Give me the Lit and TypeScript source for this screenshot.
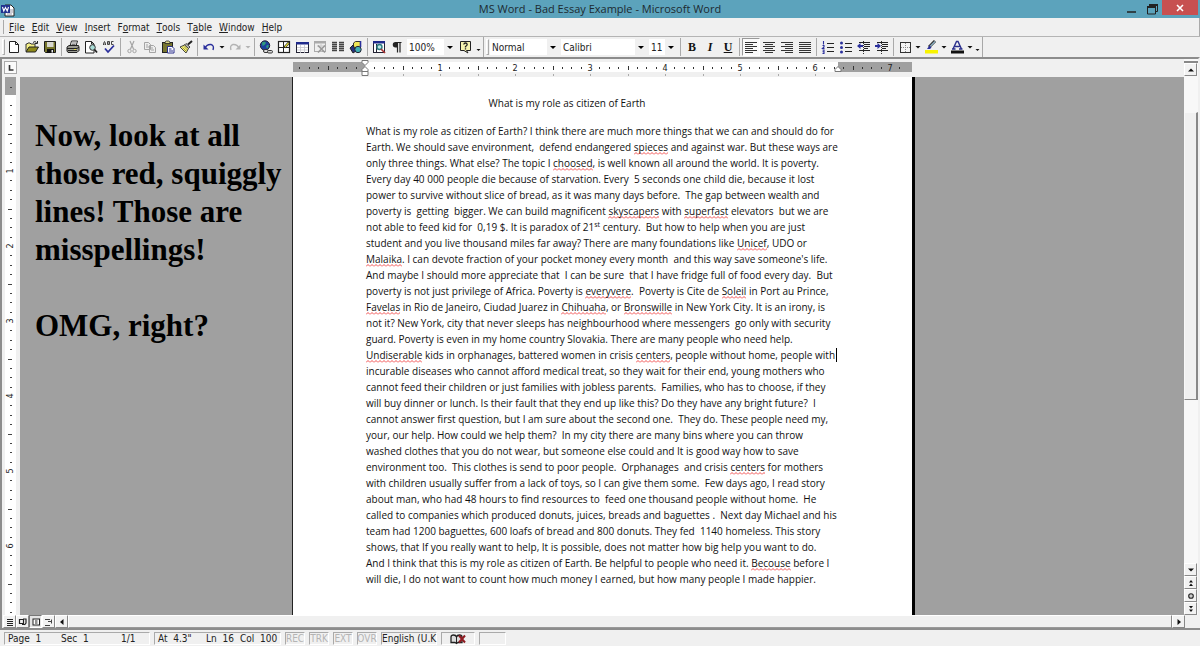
import { LitElement, html, svg, css, nothing, TemplateResult } from "lit";
import { customElement, property } from "lit/decorators.js";

const I = (body: unknown, w = 14, h = 14) =>
  html`<svg width=${w} height=${h} viewBox="0 0 ${w} ${h}" aria-hidden="true">${body}</svg>`;

const lines = (rows: number[][], color = "#222") =>
  rows.map(([x, y, w]) => svg`<rect x=${x} y=${y} width=${w} height="1" fill=${color}/>`);

const icons: Record<string, TemplateResult> = {
  word: I(svg`<path d="M5 3h6l3 3v8H5z" fill="#fff" stroke="#222"/><path d="M7 12h5M10 8h3M10 10h3" stroke="#99a"/>
    <rect x="1" y="3" width="9" height="8" fill="#22328f"/><path d="M2.5 5l1.3 4L5.5 5.5 7.2 9l1.3-4" fill="none" stroke="#fff" stroke-width="1.1"/>`, 15, 15),
  new: I(svg`<path d="M2.500 1.500h6l3 3v8h-9z" fill="#fff" stroke="#222"/><path d="M8.500 1.500v3h3" fill="none" stroke="#222"/>`),
  open: I(svg`<path d="M1 11.500V4h1l1-1h2l1 1h4v3" fill="#f4ef86" stroke="#333"/><path d="M1 12l3-5h9.500l-3 5z" fill="#8f8a1a" stroke="#222"/><path d="M8 2.500q2-2 3.500 0M12.500 1v2.500h-2.500" fill="none" stroke="#222"/>`),
  save: I(svg`<path d="M1.500 1.500h11v11h-10l-1-1z" fill="#76752b" stroke="#1c1c1c"/><rect x="4" y="2" width="6.500" height="5" fill="#d8d8d0"/><rect x="4" y="9" width="7" height="4" fill="#111"/><rect x="8.500" y="10" width="1.500" height="2.500" fill="#eee"/>`),
  print: I(svg`<path d="M4 6l1.500-5h6L10 6" fill="#fff" stroke="#222"/><path d="M6 3h4M5.500 4.500h4" stroke="#555" stroke-width=".8"/><path d="M1 7l2-1.500h9.500L13 7v3.500l-2 2H2L1 11z" fill="#9b9b93" stroke="#222"/><path d="M1 8.500h10l2-1.500M2 10.500h9" stroke="#222" fill="none"/><rect x="8" y="9" width="2" height="1" fill="#e4de3c"/>`),
  preview: I(svg`<path d="M1.500 1.500h6l2.500 2.500v9H1.500z" fill="#fff" stroke="#222"/><path d="M7.500 1.500V4H10" fill="none" stroke="#222"/><circle cx="8.500" cy="7.500" r="2.800" fill="#a9dcd6" stroke="#333"/><path d="M10.500 9.500L13 12.500" stroke="#222" stroke-width="1.800"/>`),
  spell: I(svg`<path d="M1.500 5V3.500L2.500 1.500l1 2V5M1.500 4h2M5.500 1.500v3h2v-3zM5.500 3h2M11.500 1.500h-2v3h2" fill="none" stroke="#333" stroke-width=".9"/><path d="M3 8.500L6 12l6-6.500" fill="none" stroke="#2a2f9c" stroke-width="1.800"/>`),
  cut: I(svg`<path d="M5 1l3.500 8M9 1L5.500 9" stroke="#a5a5a5" fill="none" stroke-width="1.200"/><circle cx="4.500" cy="11" r="1.700" fill="none" stroke="#a5a5a5"/><circle cx="9.500" cy="11" r="1.700" fill="none" stroke="#a5a5a5"/>`),
  copy: I(svg`<path d="M1.500 2.500h4l2 2v5h-6z M6.500 5.500h4l2 2v5h-6z" fill="#eee" stroke="#a5a5a5"/><path d="M3 5h2M3 7h3M8 8h2M8 10h3" stroke="#a5a5a5"/>`),
  paste: I(svg`<rect x="1.500" y="2.500" width="10" height="10" fill="#77752f" stroke="#222"/><path d="M4 3.500h5v-1.500l-1.500-1h-2L4 2z" fill="#ded98c" stroke="#222" stroke-width=".8"/><path d="M6.500 6.500h4.500l2 2v4.500h-6.500z" fill="#fff" stroke="#2a2f8c"/><path d="M8 9h2.500M8 11h4" stroke="#2a2f8c"/>`),
  painter: I(svg`<path d="M13 1L9 4.500" stroke="#222" stroke-width="2"/><path d="M7 3.500l4 3.500-1.500 1.500L5.500 5z" fill="#bbb" stroke="#222" stroke-width=".8"/><path d="M5.500 5L1 7l6 6 2.500-4.500z" fill="#f2ee76" stroke="#444"/><path d="M3.500 7.500l4 4M5 6.500l3.500 3.500" stroke="#8a8630" stroke-width=".8"/>`),
  undo: I(svg`<path d="M3 8q2-4 6-3.500Q12.500 5.500 11 10" fill="none" stroke="#2a2f9c" stroke-width="1.400"/><path d="M1.500 4.500v5h5z" fill="#2a2f9c"/>`),
  redo: I(svg`<path d="M11 8q-2-4-6-3.500Q1.500 5.500 3 10" fill="none" stroke="#b3b3b3" stroke-width="1.400"/><path d="M12.500 4.500v5h-5z" fill="#b3b3b3"/>`),
  globe: I(svg`<circle cx="6" cy="5.500" r="4.700" fill="#1c3f9c" stroke="#223"/><path d="M3 2.500q3-1.500 4 .5L5.500 5 3.500 6zM8 5l2 .5-1.500 3L7 7z" fill="#2f9b7c"/><rect x="4.500" y="9.500" width="5" height="3" rx="1.500" fill="#ddd" stroke="#333"/><rect x="8.500" y="10.500" width="5" height="2.500" rx="1.200" fill="#ddd" stroke="#333"/>`),
  tables: I(svg`<rect x="1.500" y="1.500" width="11" height="11" fill="#fff" stroke="#222" stroke-width="1.200"/><path d="M2 7.500h10M6.500 2v11" stroke="#222"/><path d="M12 2.500L7.500 7.500" stroke="#222" stroke-width="2.600"/><path d="M11.500 3L8 7" stroke="#e6de3a" stroke-width="1.200"/>`),
  table: I(svg`<rect x="1.500" y="2.500" width="12" height="10" fill="#fff" stroke="#223"/><rect x="1" y="2" width="13" height="2.500" fill="#1f2a8c"/><path d="M2 7.500h11M2 10h11M5.500 5v8M9.500 5v8" stroke="#c4c4cc" stroke-width=".8"/>`),
  excel: I(svg`<rect x="1.500" y="1.500" width="11" height="10" fill="#eee" stroke="#aaa"/><rect x="1" y="1" width="12" height="2.500" fill="#aaa"/><path d="M4 6h8M8 4v8" stroke="#ccc"/><path d="M5 5.500l7 7M12 5.500l-7 7" stroke="#999" stroke-width="1.600"/>`),
  columns: I(svg`<path d="M1 2.500h5M1 4.500h5M1 6.500h5M1 8.500h5M1 10.500h5M8 2.500h5M8 4.500h5M8 6.500h5M8 8.500h5M8 10.500h5" stroke="#444" stroke-width="1.400"/>`),
  draw: I(svg`<path d="M4.500 3l2-1.500h5v5l-2 2h-5z" fill="#efe655" stroke="#333"/><path d="M1 8l3-3 3 6-3 2z" fill="#27317f" stroke="#222"/><circle cx="9" cy="9.500" r="3.200" fill="#3faeb4" stroke="#223"/><path d="M11.500 1v6" stroke="#2a2f9c" stroke-width="1.600"/>`),
  docmap: I(svg`<rect x="1.500" y="1.500" width="11" height="11" fill="#fff" stroke="#223"/><rect x="1" y="1" width="12" height="2.500" fill="#1f2a8c"/><path d="M4.500 4v9" stroke="#223"/><circle cx="7.500" cy="7" r="2.500" fill="#bfe8e6" stroke="#2a7a80" stroke-width="1.400"/><path d="M9 9l4 4" stroke="#a33" stroke-width="1.700"/>`),
  para: I(svg`<path d="M7 2H5.500a2.700 2.700 0 0 0 0 5.500H7z" fill="#222"/><path d="M7.500 12.500v-10M10 12.500v-10M6.500 2.500h5" stroke="#222" fill="none" stroke-width="1.200"/>`),
  help: I(svg`<path d="M1.500 1.500h10v9h-4l1.500 2.500-4-2.500h-3.500z" fill="#f6f3b0" stroke="#222"/><path d="M4.800 4.500Q5 3 6.500 3t1.700 1.500Q8.200 5.500 6.500 6.500v1M6.500 8.300v1.200" fill="none" stroke="#222" stroke-width="1.300"/>`),
  left: I(lines([[1, 2, 12], [1, 4, 8], [1, 6, 12], [1, 8, 8], [1, 10, 12], [1, 12, 8]], "#333")),
  center: I(lines([[1, 2, 12], [3, 4, 8], [1, 6, 12], [3, 8, 8], [1, 10, 12], [3, 12, 8]], "#333")),
  right: I(lines([[1, 2, 12], [5, 4, 8], [1, 6, 12], [5, 8, 8], [1, 10, 12], [5, 12, 8]], "#333")),
  justify: I(lines([[1, 2, 12], [1, 4, 12], [1, 6, 12], [1, 8, 12], [1, 10, 12], [1, 12, 12]], "#333")),
  numbers: I(svg`<path d="M2.500 1v3.500M1.500 5.500h1.500v1.500l-1.500 1.500h2M1.500 10h1.500v3.500h-1.500M1.500 11.700h1.500" fill="none" stroke="#2a2f9c" stroke-width="1.100"/>${lines([[6, 3, 7], [6, 7, 7], [6, 11, 7]])}`),
  bullets: I(svg`<circle cx="2.500" cy="3" r="1.500" fill="#2a2f9c"/><circle cx="2.500" cy="7.500" r="1.500" fill="#2a2f9c"/><circle cx="2.500" cy="12" r="1.500" fill="#2a2f9c"/>${lines([[6, 3, 7], [6, 7, 7], [6, 11, 7]])}`),
  outdent: I(svg`${lines([[2, 2, 11], [7, 4, 6], [7, 6, 6], [7, 8, 4], [2, 10, 11]])}<path d="M0 6l3.500-3v2h2.500v2H3.500v2z" fill="#2a2f9c"/><path d="M6.500 1v13" stroke="#333" stroke-dasharray="1 1"/>`),
  indent: I(svg`${lines([[2, 2, 11], [7, 4, 6], [7, 6, 6], [7, 8, 4], [2, 10, 11]])}<path d="M6 6L2.500 3v2H0v2h2.500v2z" fill="#2a2f9c"/><path d="M6.500 1v13" stroke="#333" stroke-dasharray="1 1"/>`),
  border: I(svg`<rect x="2.500" y="2.500" width="10" height="10" fill="#f4f4f4" stroke="#333"/><path d="M7.500 3v9M3 7.500h9" stroke="#888" stroke-dasharray="1 1"/>`),
  highlight: I(svg`<path d="M11 1L5 7" stroke="#333" stroke-width="3"/><path d="M11 1.500L6 6.500" stroke="#8fb5c9" stroke-width="1.200"/><path d="M5.500 5.500L3 9h3l1.500-1.500z" fill="#2a2f9c"/><rect x="1" y="10" width="13" height="3.500" fill="#f8f400"/>`),
  fontcolor: I(svg`<path d="M3 9L6.500 1.500h1.500L11.500 9M4.500 6.500h5M2 9h3.500M9 9h3.500" fill="none" stroke="#2a2f8c" stroke-width="1.400"/><rect x="1" y="10.500" width="13" height="3" fill="#111"/>`),
  book: I(svg`<path d="M1 9.500V4q0-2 2.500-2T6.500 4q.5-2 3-2t2.500 2v5.500H8L6.500 10.500 5 9.500z" fill="#ddd" stroke="#222" stroke-width="1.300"/><path d="M6.500 4v6" stroke="#222"/><path d="M9 2.500l6 7M15 2.500l-6 7" stroke="#8f1c22" stroke-width="2"/>`, 17, 12),
  vnormal: I(lines([[2, 2, 6], [2, 4, 6], [2, 6, 6], [2, 8, 6]]), 10, 10),
  vweb: I(svg`<path d="M1.500 2.500h4v4h-4zM4 7.500h3" fill="none" stroke="#222" stroke-width="1.200"/><path d="M5 2h3v4L6.500 8" fill="none" stroke="#222" stroke-width="1.200"/>`, 10, 10),
  vprint: I(svg`<rect x="2" y="2" width="6.500" height="6" fill="#fff" stroke="#222"/><path d="M4 4h2.500M4 6h2.500" stroke="#222"/>`, 10, 10),
  voutline: I(svg`<path d="M1 2.500h5M4 4.500h4M1 8.500h5M7.500 2.500v4" stroke="#444" fill="none"/>`, 10, 10),
  tleft: I(svg`<path d="M6.500 2v6L3 5z" fill="#111"/>`, 10, 10),
  tright: I(svg`<path d="M3.500 2v6L7 5z" fill="#111"/>`, 10, 10),
  up: I(svg`<path d="M2 6.500h6L5 3.500z" fill="#111"/>`, 10, 10),
  down: I(svg`<path d="M2 3.500h6L5 6.500z" fill="#111"/>`, 10, 10),
  pageup: I(svg`<path d="M3 4.500h4L5 2zM3 8h4L5 5.500z" fill="#111"/>`, 10, 10),
  pagedown: I(svg`<path d="M3 2h4L5 4.500zM3 5.500h4L5 8z" fill="#111"/>`, 10, 10),
  browse: I(svg`<circle cx="5" cy="5" r="2.300" fill="#ccc" stroke="#222" stroke-width="1.100"/>`, 10, 10),
  arrow: I(svg`<path d="M1.500 6h5L4 8.500z" fill="#111"/>`, 8, 14),
  arrowoff: I(svg`<path d="M1.500 6h5L4 8.500z" fill="#b3b3b3"/>`, 8, 14),
  more: I(svg`<path d="M1.500 9h4L3.500 11z" fill="#111"/>`, 8, 14),
};

const base = css`
  * { box-sizing: border-box; }
  :host { font-family: "DejaVu Sans Condensed", "DejaVu Sans", sans-serif; font-size: 10px; color: #222; }
  button { border: 0; padding: 0; margin: 0; background: none; font: inherit; color: inherit; display: flex; align-items: center; justify-content: center; }
  svg { display: block; flex: none; }
`;

@customElement("word-toolbar")
class WordToolbar extends LitElement {
  static styles = [base, css`
    :host { display: block; }
    .bar { display: flex; align-items: center; height: 21px; background: #f0f0f0; border-top: 1px solid #b4b4b4; }
    .grip { width: 3px; height: 16px; border: 1px solid #aaa; border-left-color: #fff; border-top-color: #fff; margin: 0 0 0 2px; }
    .set { display: flex; align-items: center; border-right: 1px solid #a8a8a8; height: 20px; }
    .tool { width: 18px; height: 18px; }
    .drop { width: 8px; height: 18px; }
    .pressed { background: #fafafa; border: 1px solid; border-color: #999 #fff #fff #999; }
    .sep { width: 1px; height: 18px; background: #aaa; margin: 0 2px; }
    .letter { font: bold 12px "Liberation Serif", serif; color: #111; }
    .italic { font-style: italic; }
    .under { text-decoration: underline; }
    select { appearance: none; border: 0; border-radius: 0; margin: 0 1px; padding: 0 12px 0 2px; height: 16px; font: inherit; color: #222;
      background: #fff url("data:image/svg+xml,%3Csvg xmlns='http://www.w3.org/2000/svg' width='12' height='16'%3E%3Cpath fill='%23f0f0f0' d='M0 0h12v16H0z'/%3E%3Cpath d='M3 7h6L6 10z'/%3E%3C/svg%3E") right / 12px 16px no-repeat; }
    .zoom { width: 49px; }
    .style { width: 69px; }
    .face { width: 86px; }
    .size { width: 28px; }
  `];

  tool(name: string, label: string, extra = "") {
    return html`<button class="tool ${extra}" aria-label=${label}>${icons[name]}</button>`;
  }
  drop(name = "arrow") {
    return html`<button class="drop" aria-label="More options">${icons[name]}</button>`;
  }
  render() {
    const sep = html`<span class="sep"></span>`;
    const t = (n: string, l: string) => this.tool(n, l);
    return html`<div class="bar">
      <div class="set">
        <span class="grip"></span>
        ${t("new", "New")}${t("open", "Open")}${t("save", "Save")}${sep}
        ${t("print", "Print")}${t("preview", "Print preview")}${t("spell", "Spelling")}${sep}
        ${t("cut", "Cut")}${t("copy", "Copy")}${t("paste", "Paste")}${t("painter", "Format painter")}${sep}
        ${t("undo", "Undo")}${this.drop()}${t("redo", "Redo")}${this.drop("arrowoff")}${sep}
        ${t("globe", "Hyperlink")}${t("tables", "Tables and borders")}${t("table", "Insert table")}${t("excel", "Insert worksheet")}${t("columns", "Columns")}${t("draw", "Drawing")}${sep}
        ${t("docmap", "Document map")}${t("para", "Show marks")}
        <select class="zoom" aria-label="Zoom"><option>100%</option></select>
        ${t("help", "Help")}${this.drop("more")}
      </div>
      <div class="set">
        <span class="grip"></span>
        <select class="style" aria-label="Style"><option>Normal</option></select>
        <select class="face" aria-label="Font"><option>Calibri</option></select>
        <select class="size" aria-label="Font size"><option>11</option></select>${sep}
        <button class="tool letter">B</button><button class="tool letter italic">I</button><button class="tool letter under">U</button>${sep}
        ${this.tool("left", "Align left", "pressed")}${t("center", "Center")}${t("right", "Align right")}${t("justify", "Justify")}${sep}
        ${t("numbers", "Numbering")}${t("bullets", "Bullets")}${t("outdent", "Decrease indent")}${t("indent", "Increase indent")}${sep}
        ${t("border", "Borders")}${this.drop()}${t("highlight", "Highlight")}${this.drop()}${t("fontcolor", "Font color")}${this.drop()}${this.drop("more")}
      </div>
    </div>`;
  }
}

const INCH = 75;

@customElement("word-ruler")
class WordRuler extends LitElement {
  @property({ type: Boolean }) vertical = false;
  static styles = [base, css`
    :host { display: block; }
    text { font-size: 9px; text-anchor: middle; fill: #222; }
  `];
  render() {
    const length = this.vertical ? 539 : 619;
    const zero = this.vertical ? 19 : 72;
    const end = this.vertical ? length : 545;
    const marks: unknown[] = [];
    for (let i = -8; i < 64; i++) {
      const p = Math.round(zero + (i * INCH) / 8);
      if (p < 4 || p > length - 4 || i === 0) continue;
      if (i % 8 === 0 && i > 0) {
        marks.push(this.vertical
          ? svg`<text x="5" y=${p} transform="rotate(-90 5 ${p})" dy="3">${i / 8}</text>`
          : svg`<text x=${p} y="9">${i / 8}</text>`);
      } else {
        const long = i % 4 === 0 ? 4 : 1;
        marks.push(this.vertical
          ? svg`<rect x=${long > 1 ? 3 : 5} y=${p} width=${long > 1 ? 4 : 2} height="1" fill="#444"/>`
          : svg`<rect x=${p} y=${long > 1 ? 4 : 5} width="1" height=${long > 1 ? 4 : 2} fill="#333"/>`);
      }
    }
    if (this.vertical) {
      return html`<svg width="11" height=${length} aria-hidden="true">
        <rect width="11" height=${length} fill="#fff"/><rect width="11" height=${zero - 1} fill="#a0a0a0"/>${marks}</svg>`;
    }
    const ticks: unknown[] = [];
    for (let x = zero + INCH / 2; x < end; x += INCH / 2) ticks.push(svg`<rect x=${Math.round(x)} y="12" width="1" height="2" fill="#aaa"/>`);
    return html`<svg width=${length} height="17" viewBox="0 -3 ${length} 17" aria-hidden="true">
      <rect width=${length} height="10" fill="#a0a0a0"/><rect x=${zero} width=${end - zero} height="10" fill="#fff"/>
      ${marks}${ticks}
      <path d="M${zero - 3} -1.500h6v2l-3 3-3-3zM${zero - 3} 9.500v-2l3-3 3 3v2zM${zero - 3} 9.500h6v4h-6z" fill="#fff" stroke="#777"/>
      <path d="M${end - 3} 9.500v-2l3-3 3 3v2z" fill="#fff" stroke="#777"/>
    </svg>`;
  }
}

// Words between asterisks are flagged by the spelling checker; ^..^ is superscript.
const ESSAY = [
  "What is my role as citizen of Earth? I think there are much more things that we can and should do for",
  "Earth. We should save environment,  defend endangered *spieces* and against war. But these ways are",
  "only three things. What else? The topic I *choosed*, is well known all around the world. It is poverty.",
  "Every day 40 000 people die because of starvation. Every  5 seconds one child die, because it lost",
  "power to survive without slice of bread, as it was many days before.  The gap between wealth and",
  "poverty is  getting  bigger. We can build magnificent *skyscapers* with *superfast* elevators  but we are",
  "not able to feed kid for  0,19 $. It is paradox of 21^st^ century.  But how to help when you are just",
  "student and you live thousand miles far away? There are many foundations like *Unicef*, UDO or",
  "*Malaika*. I can devote fraction of your pocket money every month  and this way save someone's life.",
  "And maybe I should more appreciate that  I can be sure  that I have fridge full of food every day.  But",
  "poverty is not just privilege of Africa. Poverty is *everyvere*.  Poverty is Cite de *Soleil* in Port au Prince,",
  "*Favelas* in Rio de Janeiro, Ciudad Juarez in *Chihuaha*, or *Bronswille* in New York City. It is an irony, is",
  "not it? New York, city that never sleeps has neighbourhood where messengers  go only with security",
  "guard. Poverty is even in my home country Slovakia. There are many people who need help.",
  "*Undiserable* kids in orphanages, battered women in crisis *centers*, people without home, people with|",
  "incurable diseases who cannot afford medical treat, so they wait for their end, young mothers who",
  "cannot feed their children or just families with jobless parents.  Families, who has to choose, if they",
  "will buy dinner or lunch. Is their fault that they end up like this? Do they have any bright future?  I",
  "cannot answer first question, but I am sure about the second one.  They do. These people need my,",
  "your, our help. How could we help them?  In my city there are many bins where you can throw",
  "washed clothes that you do not wear, but someone else could and It is good way how to save",
  "environment too.  This clothes is send to poor people.  Orphanages  and crisis *centers* for mothers",
  "with children usually suffer from a lack of toys, so I can give them some.  Few days ago, I read story",
  "about man, who had 48 hours to find resources to  feed one thousand people without home.  He",
  "called to companies which produced donuts, juices, breads and baguettes .  Next day Michael and his",
  "team had 1200 baguettes, 600 loafs of bread and 800 donuts. They fed  1140 homeless. This story",
  "shows, that If you really want to help, It is possible, does not matter how big help you want to do.",
  "And I think that this is my role as citizen of Earth. Be helpful to people who need it. *Becouse* before I",
  "will die, I do not want to count how much money I earned, but how many people I made happier.",
];

@customElement("word-page")
class WordPage extends LitElement {
  static styles = [base, css`
    :host { display: block; background: #fff; border-left: 1px solid #222; border-right: 3px solid #000; width: 623px; padding: 18px 72px 0 73px;
      font: 10px/16px "Open Sans", Carlito, sans-serif; color: #111; overflow: hidden; }
    h1 { margin: 0 0 12px; padding-right: 72px; font: inherit; text-align: center; }
    p { margin: 0; }
    .line { display: block; white-space: pre; }
    .bad { padding-bottom: 1px; background: url("data:image/svg+xml,%3Csvg xmlns='http://www.w3.org/2000/svg' width='4' height='3'%3E%3Cpath d='M0 2.500L2 .5l2 2' fill='none' stroke='%23e22' stroke-width='.8'/%3E%3C/svg%3E") left bottom / 4px 3px repeat-x; }
    sup { font-size: 7px; line-height: 1px; }
    .caret { display: inline-block; width: 1px; height: 14px; background: #000; vertical-align: -3px; margin-left: 1px; }
  `];
  render() {
    return html`<h1>What is my role as citizen of Earth</h1>
      <p>${ESSAY.map((l) => html`<span class="line">${l.split(/(\*[^*]+\*|\^[^^]+\^|\|)/).map((s) =>
        s[0] === "*" ? html`<span class="bad">${s.slice(1, -1)}</span>`
        : s[0] === "^" ? html`<sup>${s.slice(1, -1)}</sup>`
        : s === "|" ? html`<span class="caret"></span>` : s)}</span>`)}</p>`;
  }
}

@customElement("app-root")
class AppRoot extends LitElement {
  static styles = [base, css`
    :host { display: flex; flex-direction: column; height: 100vh; background: #f0f0f0; overflow: hidden; border-bottom: 1px solid #8fa6ac; }
    .title { display: flex; align-items: center; height: 18px; flex: none; background: #5ca3bc; color: #1c2a30; }
    .title h1 { flex: 1; margin: 0; font: 11px/18px "Open Sans", sans-serif; text-align: center; padding-left: 62px; }
    .logo { width: 16px; }
    .wins { display: flex; height: 18px; }
    .win { width: 20px; }
    .close { width: 36px; height: 15px; background: #c75050; margin-right: 2px; }
    .menu { display: flex; align-items: center; height: 18px; flex: none; padding-left: 2px; gap: 7px; border-right: 1px solid #aaa; }
    .menu .grip { width: 2px; height: 14px; border-right: 1px solid #aaa; margin-right: -2px; }
    .menu u { text-underline-offset: 1px; }
    .main { flex: 1; min-height: 0; display: grid; grid-template-columns: 18px 1fr 14px; border: 2px solid #8c8c8c; border-right-color: #f0f0f0; border-bottom: 0; }
    .side { padding-left: 3px; overflow: hidden; }
    .tab { width: 13px; height: 13px; margin: 2px 0 3px -1px; border: 1px solid #aaa; background: #fafafa; }
    .mid { display: flex; flex-direction: column; min-width: 0; overflow: hidden; }
    .hr { height: 18px; flex: none; padding: 0 0 0 273px; }
    .work { flex: 1; min-height: 0; display: flex; background: #a0a0a0; overflow: hidden; }
    .note { width: 272px; flex: none; padding: 40px 0 0 15px; margin: 0; font: bold 31px/38px "Liberation Serif", serif; color: #000; white-space: pre; }
    word-page { flex: none; }
    .vs { display: flex; flex-direction: column; background: #f8f8f8; }
    .btn { width: 13px; height: 13px; background: #f2f2f2; border: 1px solid; border-color: #fff #888 #888 #fff; }
    .split { height: 4px; border-bottom: 2px solid #888; }
    .g1 { flex: 36; }
    .thumb { flex: 287; background: #f0f0f0; border: 1px solid; border-color: #f8f8f8 #888 #888 #f8f8f8; border-right-width: 2px; }
    .g2 { flex: 163; }
    .hs { display: flex; flex: none; height: 15px; padding: 0 15px 0 1px; border: solid #8c8c8c; border-width: 0 0 2px 2px; }
    .on { background: #e4e4e4; border-color: #777 #fff #fff #777; }
    .hthumb { flex: 1; height: 13px; border: 1px solid; border-color: #fff #888 #999 #fff; }
    .status { display: flex; align-items: center; flex: none; height: 16px; padding: 1px 4px 0; gap: 4px; }
    .cell { height: 13px; border: 1px solid; border-color: #aaa #fff #fff #aaa; display: flex; align-items: center; padding: 0 2px 0 3px; white-space: pre; }
    .c1 { width: 146px; } .c2 { width: 127px; } .c3 { padding: 0; } .c4 { width: 34px; justify-content: center; } .c5 { width: 27px; }
    .f1 { width: 53px; } .f2 { width: 60px; } .f3 { width: 48px; } .f4 { width: 34px; }
    .off { width: 20px; color: #b4b4b4; padding: 0; justify-content: center; }
  `];

  render() {
    const menu: [string, string, string][] = [["", "F", "ile"], ["", "E", "dit"], ["", "V", "iew"], ["", "I", "nsert"], ["F", "o", "rmat"], ["", "T", "ools"], ["T", "a", "ble"], ["", "W", "indow"], ["", "H", "elp"]];
    const b = (n: string, l: string, on = false) => html`<button class="btn ${on ? "on" : ""}" aria-label=${l}>${icons[n]}</button>`;
    return html`
      <header class="title">
        <span class="logo">${icons.word}</span>
        <h1>MS Word - Bad Essay Example - Microsoft Word</h1>
        <div class="wins">
          <button class="win" aria-label="Minimize">${I(svg`<path d="M2 10h9" stroke="#222" stroke-width="1.500"/>`)}</button>
          <button class="win" aria-label="Restore">${I(svg`<path d="M4.500 4V2.500h8v7H11M2.500 5h8v7h-8z" fill="none" stroke="#222"/><path d="M2 5h9M4 3h9" stroke="#222" stroke-width="1.800"/>`)}</button>
          <button class="close" aria-label="Close">${I(svg`<path d="M4 4l6 6M10 4l-6 6" stroke="#fff" stroke-width="1.600"/>`)}</button>
        </div>
      </header>
      <nav class="menu"><span class="grip"></span>${menu.map(([p, k, r]) => html`<button>${p || nothing}<u>${k}</u>${r}</button>`)}</nav>
      <word-toolbar></word-toolbar>
      <div class="main">
        <div class="side">
          <button class="tab" aria-label="Tab type">${I(svg`<path d="M3.500 2v5h4" fill="none" stroke="#333" stroke-width="1.600"/>`, 10, 10)}</button>
          <word-ruler vertical></word-ruler>
        </div>
        <div class="mid">
          <div class="hr"><word-ruler></word-ruler></div>
          <div class="work">
            <p class="note">Now, look at all
those red, squiggly
lines! Those are
misspellings!

OMG, right?</p>
            <word-page></word-page>
          </div>
        </div>
        <div class="vs">
          <span class="split"></span>${b("up", "Scroll up")}
          <span class="g1"></span><span class="thumb"></span><span class="g2"></span>
          ${b("down", "Scroll down")}${b("pageup", "Previous page")}${b("browse", "Select browse object")}${b("pagedown", "Next page")}
        </div>
      </div>
      <div class="hs">
        ${b("vnormal", "Normal view")}${b("vweb", "Web layout")}${b("vprint", "Print layout", true)}${b("voutline", "Outline")}${b("tleft", "Scroll left")}
        <span class="hthumb"></span>${b("tright", "Scroll right")}
      </div>
      <footer class="status">
        <span class="cell c1"><span class="f1">Page  1</span><span class="f2">Sec  1</span><span>1/1</span></span>
        <span class="cell c2"><span class="f3">At  4.3"</span><span class="f4">Ln  16</span><span>Col  100</span></span>
        ${["REC", "TRK", "EXT", "OVR"].map((s) => html`<span class="cell off">${s}</span>`)}
        <span class="cell c3">English (U.K</span><span class="cell c4">${icons.book}</span><span class="cell c5"></span>
      </footer>`;
  }
}
